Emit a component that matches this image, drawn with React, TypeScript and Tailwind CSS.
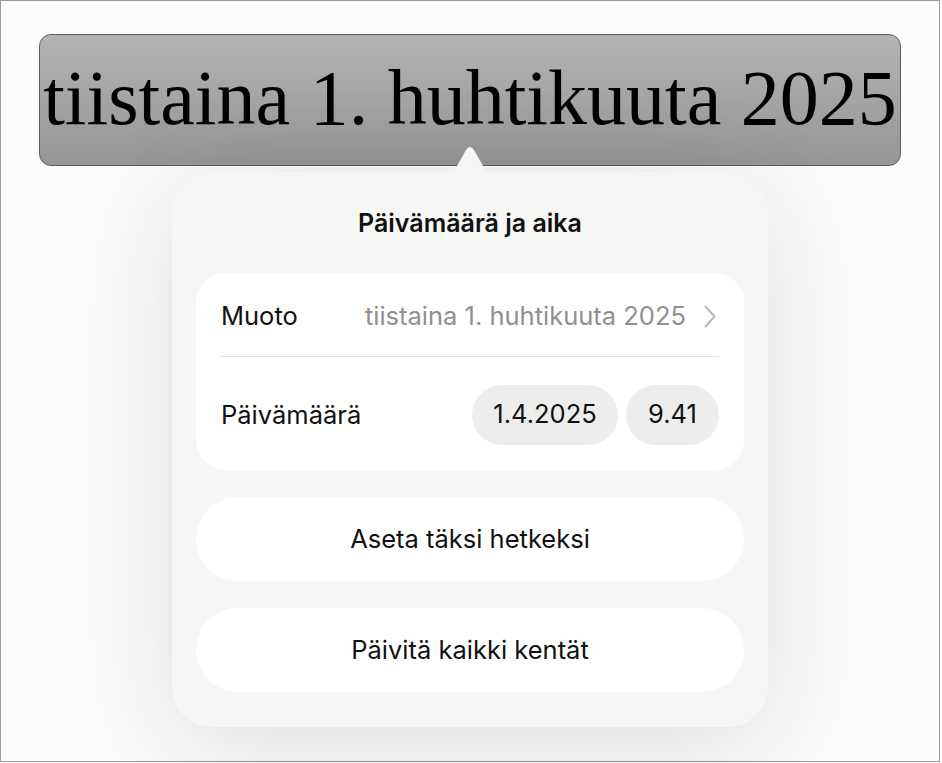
const ui = { fontFamily: "Inter, 'Noto Sans', sans-serif" };

function Pill({ children, className }: { children: string; className: string }) {
  return (
    <div
      className={`flex h-[60px] items-center justify-center rounded-full bg-[#ededed] text-[25.5px] text-[#111] ${className}`}
    >
      {children}
    </div>
  );
}

function ActionButton({ label }: { label: string }) {
  return (
    <button
      type="button"
      className="flex h-[84px] w-full items-center justify-center rounded-[42px] bg-white text-[25.5px] text-[#111]"
    >
      {label}
    </button>
  );
}

export default function App() {
  return (
    <div className="h-[763px] w-[942px] bg-white">
      <div className="flex h-[762px] w-[940px] flex-col items-center border border-[#9a9a9a] bg-[#fcfcfc]">
        {/* selected date field */}
        <div className="mt-[33px] flex h-[132px] w-[862px] items-center justify-center rounded-[12px] border border-[#5e5e5e] bg-gradient-to-b from-[#b3b3b3] to-[#969696]">
          <span
            className="whitespace-nowrap pb-[4px] text-[78px] leading-none text-black"
            style={{ fontFamily: "'Liberation Serif', serif" }}
          >
            tiistaina 1. huhtikuuta 2025
          </span>
        </div>

        {/* popover */}
        <div
          className="relative mt-[6px] flex w-[596px] flex-col rounded-[40px] bg-[#f6f6f5] px-[24px] pb-[35px] shadow-[0_20px_110px_rgba(0,0,0,0.13)]"
          style={ui}
        >
          <svg
            className="absolute left-[281px] top-[-26px]"
            width="34"
            height="27"
            viewBox="0 0 34 27"
          >
            <path d="M0 27 L13 4 Q17 -2 21 4 L34 27 Z" fill="#f6f6f5" />
          </svg>

          <h2 className="pt-[37px] text-center text-[25px] font-semibold leading-[28px] text-[#111]">
            Päivämäärä ja aika
          </h2>

          <div className="mt-[36px] rounded-[30px] bg-white px-[25px]">
            <div className="flex h-[84px] items-center justify-between border-b border-[#e2e2e2] pt-[3px] text-[25.5px]">
              <span className="text-[#111]">Muoto</span>
              <span className="flex items-center gap-[18px] pr-[3px] text-[#909090]">
                tiistaina 1. huhtikuuta 2025
                <svg width="12" height="23" viewBox="0 0 12 23" fill="none">
                  <path
                    d="M1.5 1.5 L10.5 11.5 L1.5 21.5"
                    stroke="#b8b8b8"
                    strokeWidth="2"
                    strokeLinecap="round"
                    strokeLinejoin="round"
                  />
                </svg>
              </span>
            </div>
            <div className="flex h-[113px] items-center justify-between pt-[2px] text-[25.5px]">
              <span className="pt-[1px] text-[#111]">Päivämäärä</span>
              <div className="flex gap-[8px]">
                <Pill className="w-[146px]">1.4.2025</Pill>
                <Pill className="w-[93px]">9.41</Pill>
              </div>
            </div>
          </div>

          <div className="mt-[27px] flex flex-col gap-[27px]">
            <ActionButton label="Aseta täksi hetkeksi" />
            <ActionButton label="Päivitä kaikki kentät" />
          </div>
        </div>
      </div>
    </div>
  );
}
